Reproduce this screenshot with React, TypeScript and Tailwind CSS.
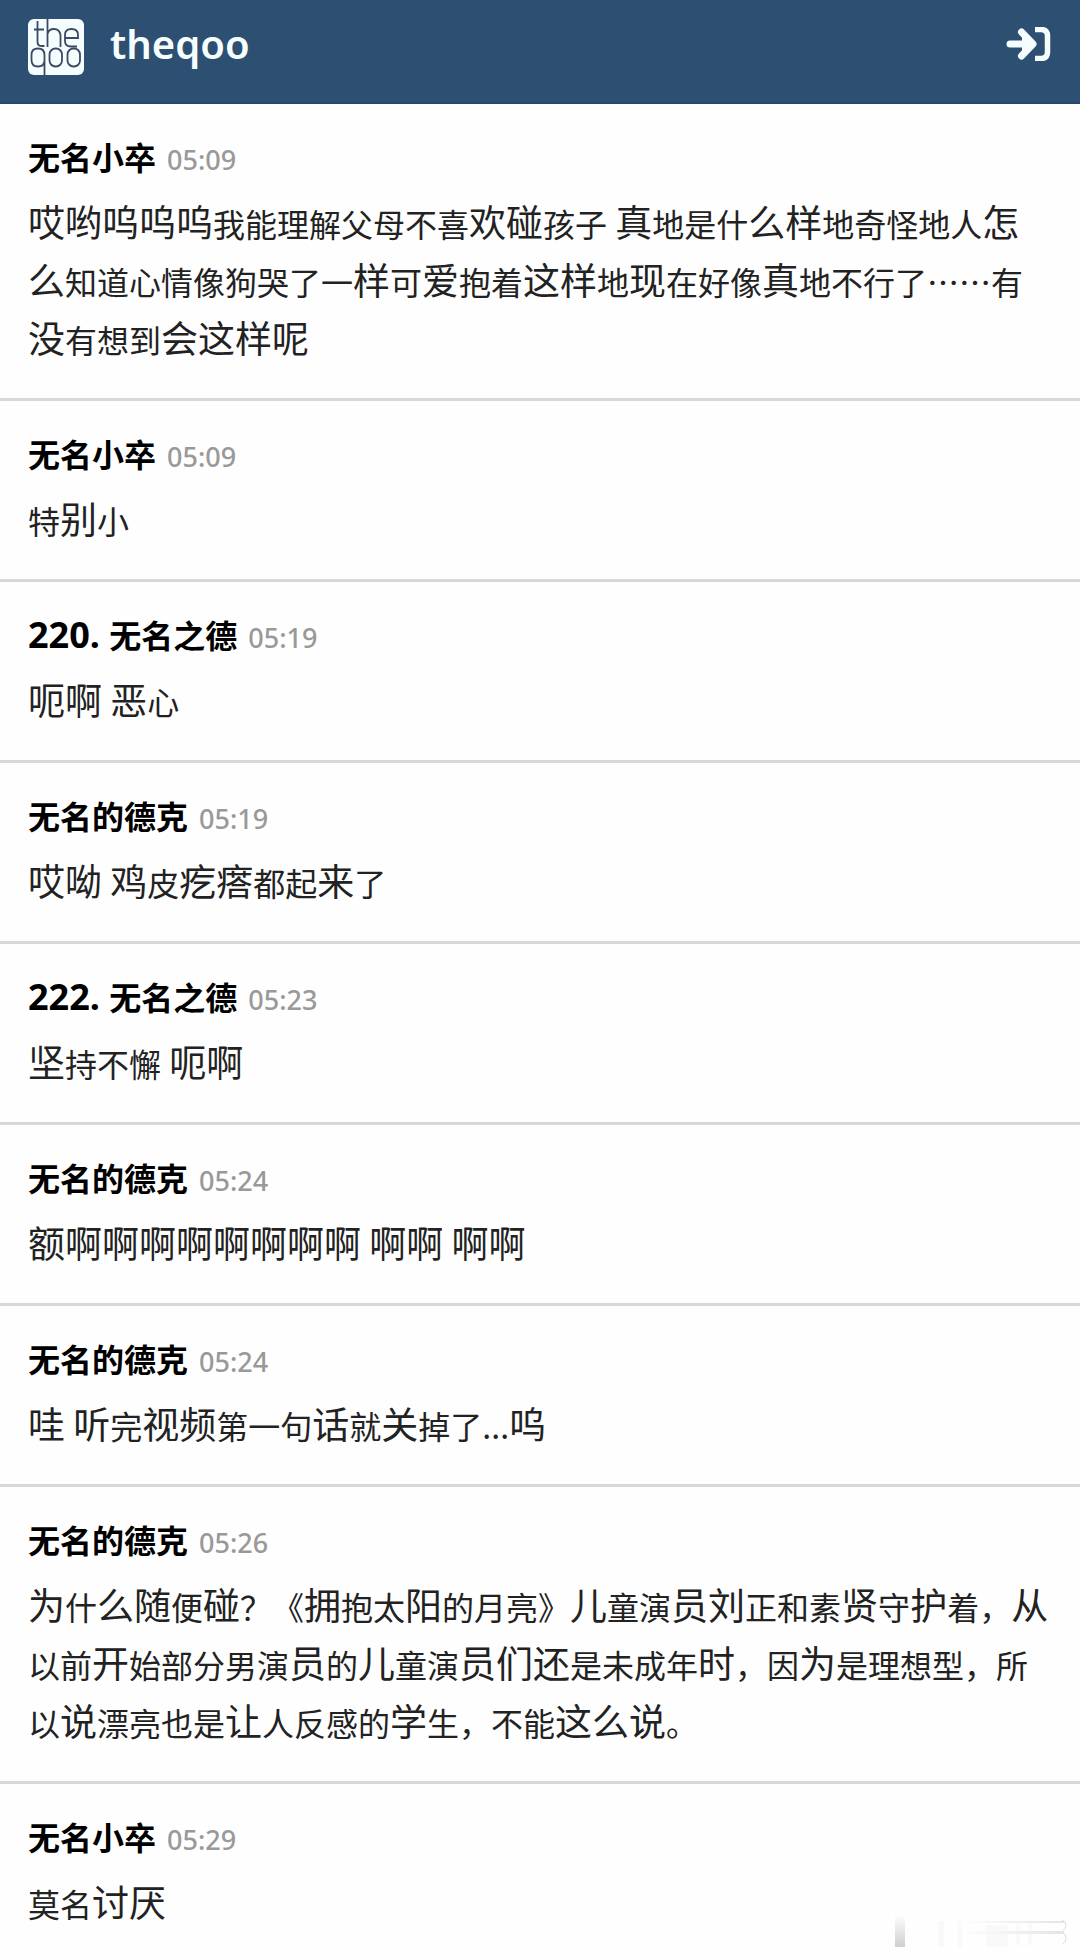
import { Fragment } from 'react';

interface Comment {
  id: number;
  floor?: string;
  author: string;
  time: string;
  content: string;
}

const comments: Comment[] = [
  {
    id: 1,
    author: '无名小卒',
    time: '05:09',
    content:
      '哎哟呜呜呜我能理解父母不喜欢碰孩子 真地是什么样地奇怪地人怎么知道心情像狗哭了一样可爱抱着这样地现在好像真地不行了……有没有想到会这样呢',
  },
  { id: 2, author: '无名小卒', time: '05:09', content: '特别小' },
  { id: 3, floor: '220.', author: '无名之德', time: '05:19', content: '呃啊 恶心' },
  { id: 4, author: '无名的德克', time: '05:19', content: '哎呦 鸡皮疙瘩都起来了' },
  { id: 5, floor: '222.', author: '无名之德', time: '05:23', content: '坚持不懈 呃啊' },
  { id: 6, author: '无名的德克', time: '05:24', content: '额啊啊啊啊啊啊啊啊 啊啊 啊啊' },
  { id: 7, author: '无名的德克', time: '05:24', content: '哇 听完视频第一句话就关掉了...呜' },
  {
    id: 8,
    author: '无名的德克',
    time: '05:26',
    content:
      '为什么随便碰？《拥抱太阳的月亮》儿童演员刘正和素贤守护着，从以前开始部分男演员的儿童演员们还是未成年时，因为是理想型，所以说漂亮也是让人反感的学生，不能这么说。',
  },
  { id: 9, author: '无名小卒', time: '05:29', content: '莫名讨厌' },
];

const LARGE = /([哎哟呦呜欢碰真么样怎爱这现没会呢呃啊恶鸡疙瘩来为随拥阳儿员刘贤护从开们还时说让学额坚听视频话关哇别讨厌 ]+)/;

function CommentText({ text }: { text: string }) {
  return (
    <p className="mt-3 font-['Noto_Sans_CJK_SC',sans-serif] text-[32px] leading-[58px] text-[#222]">
      {text.split(LARGE).map((part, i) =>
        i % 2 === 1 ? (
          <span key={i} className="text-[37px] leading-none">
            {part}
          </span>
        ) : (
          <Fragment key={i}>{part}</Fragment>
        )
      )}
    </p>
  );
}

function Logo() {
  return (
    <svg viewBox="0 0 56 56" className="h-14 w-14" fill="none" stroke="#3a4a63" strokeWidth="1.8" aria-hidden="true">
      <rect width="56" height="56" rx="6" fill="#f6fdff" stroke="none" />
      <path d="M9.500 2v21q0 4 4 4h3M6 10.500h10" />
      <path d="M19.500 0v28M19.500 15q1-5 6.500-5t6.500 6v12" />
      <path d="M37 19h13v-3q0-6-6.500-6T37 16v6q0 5.500 6 5.500h6" />
      <path d="M16.500 56V36q0-6.500-6.500-6.500T3.500 36v5q0 6.500 6.500 6.500t6.500-6.500" />
      <rect x="21.500" y="29.500" width="12.500" height="18" rx="6" />
      <rect x="39.500" y="29.500" width="12.500" height="18" rx="6" />
    </svg>
  );
}

function LoginIcon() {
  return (
    <svg viewBox="0 0 46 34" className="h-[34px] w-[46px]" fill="none" stroke="#f6fdff" strokeLinecap="round" aria-hidden="true">
      <path d="M4 17H25" strokeWidth="7" />
      <path d="M15.500 5L27 17L15.500 29" strokeWidth="7" strokeLinejoin="round" />
      <path d="M16 8l11 9-11 9z" fill="#f6fdff" stroke="none" />
      <path d="M29 2.500h6q6.500 0 6.500 6.500v16q0 6.500-6.500 6.500h-6" strokeWidth="5.500" strokeLinecap="butt" />
    </svg>
  );
}

function Watermark() {
  return (
    <svg viewBox="0 0 176 32" className="absolute right-3 bottom-3 h-8 w-44" aria-hidden="true">
      <defs>
        <linearGradient id="stain" x1="0" y1="0" x2="0" y2="1">
          <stop offset="0" stopColor="#fefefe" />
          <stop offset="1" stopColor="#cfcfcf" />
        </linearGradient>
        <linearGradient id="streak" x1="0" y1="0" x2="1" y2="0">
          <stop offset="0" stopColor="#fefefe" />
          <stop offset="1" stopColor="#e4e4e4" />
        </linearGradient>
      </defs>
      <rect x="3" width="10" height="32" fill="url(#stain)" />
      <path d="M46 6h6v26h-6zM66 6h4v26h-4zM94 10h22v22H94zM124 6h4v24h-4zM136 6h4v24h-4z" fill="#f9f9f9" />
      <rect x="70" y="6" width="102" height="2" fill="url(#streak)" />
      <rect x="70" y="16" width="102" height="3" fill="url(#streak)" />
      <path d="M170 5q4 1 4 5t-3 5M171 18q3 1 3 5t-3 6" fill="none" stroke="#dcdcdc" />
    </svg>
  );
}

export default function App() {
  return (
    <div className="relative min-h-screen bg-[#fefefe] font-['Noto_Sans','Noto_Sans_CJK_SC',sans-serif]">
      <header className="flex h-[104px] items-center justify-between border-b-2 border-[#28476b] bg-[#2d4f71] px-7 pb-2">
        <a href="#" className="flex items-center gap-[26px]">
          <Logo />
          <span className="pb-1.5 text-[40px] leading-[48px] font-semibold text-[#f6fdff]">theqoo</span>
        </a>
        <button type="button" aria-label="login" className="pb-1.5">
          <LoginIcon />
        </button>
      </header>
      <main>
        {comments.map((comment) => (
          <article key={comment.id} className="border-b-3 border-[#d8d8d8] px-7 py-[30px] last:border-b-0 last:pb-2">
            <div className="flex items-baseline gap-[11px] leading-[48px]">
              <h2 className="text-[32px] font-bold text-black">
                {comment.floor && <span className="text-[36px] leading-none">{comment.floor} </span>}
                {comment.author}
              </h2>
              <time className="text-[27px] leading-none font-medium text-[#999]">{comment.time}</time>
            </div>
            <CommentText text={comment.content} />
          </article>
        ))}
      </main>
      <Watermark />
    </div>
  );
}
